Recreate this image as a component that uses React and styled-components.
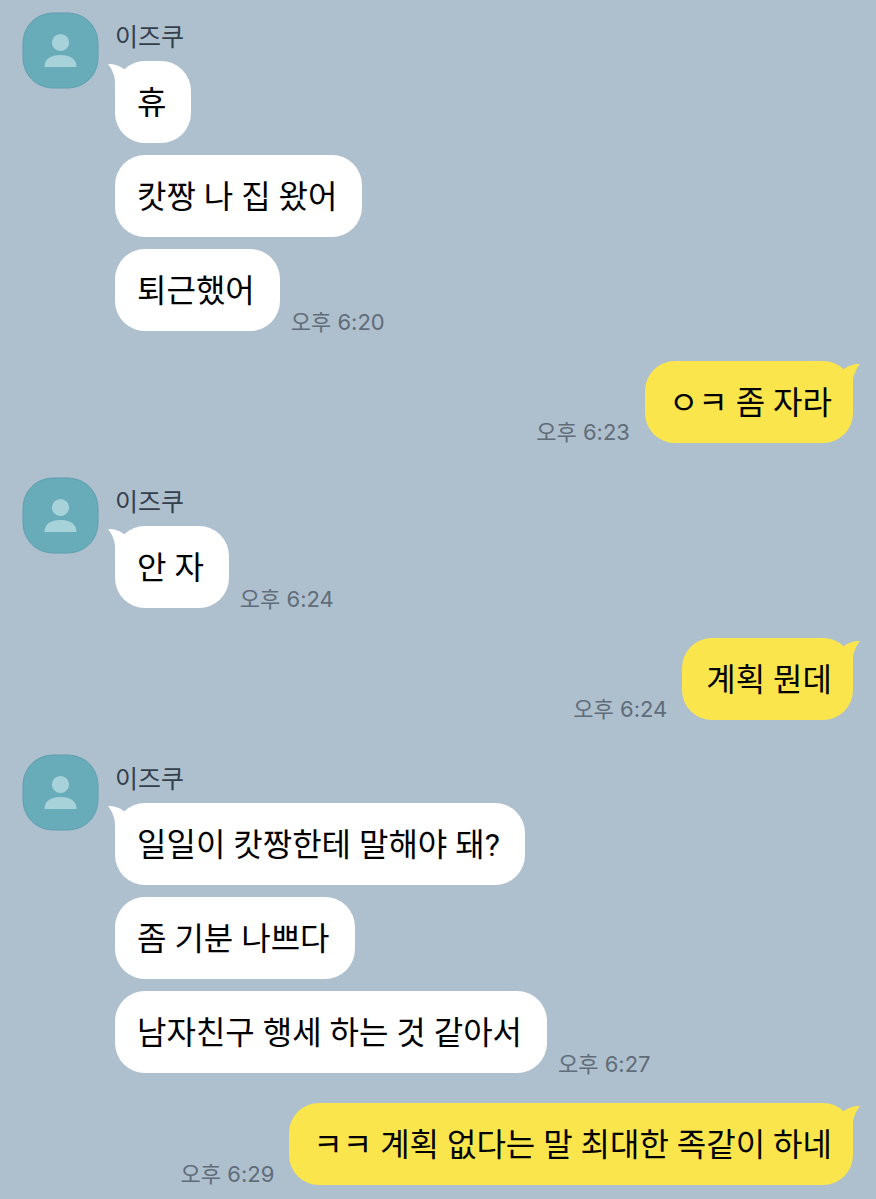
import React from 'react'
import styled, { createGlobalStyle } from 'styled-components'

const GlobalStyle = createGlobalStyle`
    * {
        box-sizing : border-box;
    }
    body {
        margin : 0;
        background-color : #aebfce;
        font-family : Inter, "Noto Sans CJK KR", sans-serif;
    }
`
const Chat = styled.main`
    display : flex;
    flex-direction : column;
    min-height : 100vh;
    padding : 12px 23px 12px 22px;
    background-color : #aebfce;
`
const ReceivedGroup = styled.section`
    display : flex;
    align-items : flex-start;
    gap : 16px;
    margin-top : 34px;
    &:first-child {
        margin-top : 0;
    }
`
const SentGroup = styled.section`
    display : flex;
    flex-direction : column;
    gap : 12px;
    margin-top : 30px;
`
const AvatarIcon = styled.svg`
    flex : none;
    width : 77px;
    height : 77px;
`
const Messages = styled.div`
    display : flex;
    flex-direction : column;
    gap : 12px;
    min-width : 0;
`
const Name = styled.h2`
    margin : 0 0 -12px;
    padding-top : 1px;
    font-size : 25px;
    font-weight : 400;
    line-height : 48px;
    color : #33404c;
`
const Row = styled.div`
    display : flex;
    align-items : flex-end;
    justify-content : ${({ $sent }) => ($sent ? 'flex-end' : 'flex-start')};
    gap : ${({ $sent }) => ($sent ? '15px' : '11px')};
`
const Bubble = styled.p`
    position : relative;
    margin : 0;
    padding : ${({ $sent }) => ($sent ? '18px 21px 16px 24px' : '18px 25px 16px 22px')};
    border-radius : 30px;
    background-color : ${({ $sent }) => ($sent ? '#fae64c' : '#ffffff')};
    font-family : Roboto, "Noto Sans CJK KR", sans-serif;
    font-size : 32px;
    line-height : 48px;
    color : #000000;
`
const TailIcon = styled.svg`
    position : absolute;
    top : 3px;
    width : 18px;
    height : 26px;
    fill : ${({ $sent }) => ($sent ? '#fae64c' : '#ffffff')};
    ${({ $sent }) => ($sent ? 'right : -7px;' : 'left : -7px; transform : scaleX(-1);')}
`
const Time = styled.time`
    flex : none;
    font-size : 22px;
    font-weight : 400;
    line-height : ${({ $sent }) => ($sent ? '22px' : '18px')};
    white-space : nowrap;
    color : #606c78;
`

const conversation = [
    { name: '이즈쿠', time: '오후 6:20', texts: ['휴', '캇짱 나 집 왔어', '퇴근했어'] },
    { sent: true, time: '오후 6:23', texts: ['ㅇㅋ 좀 자라'] },
    { name: '이즈쿠', time: '오후 6:24', texts: ['안 자'] },
    { sent: true, time: '오후 6:24', texts: ['계획 뭔데'] },
    { name: '이즈쿠', time: '오후 6:27', texts: ['일일이 캇짱한테 말해야 돼?', '좀 기분 나쁘다', '남자친구 행세 하는 것 같아서'] },
    { sent: true, time: '오후 6:29', texts: ['ㅋㅋ 계획 없다는 말 최대한 족같이 하네'] },
]

const Avatar = () => (
    <AvatarIcon viewBox="0 0 77 77" aria-hidden="true">
        <path
            d="M32 1H45C63 1 76 14 76 32V45C76 63 63 76 45 76H32C14 76 1 63 1 45V32C1 14 14 1 32 1Z"
            fill="#68abb9"
            stroke="#5d9fae"
        />
        <circle cx="38.5" cy="30.5" r="8.6" fill="#a8d2da" />
        <path d="M22.5 55C22.5 47 28.5 43 38.5 43S54.5 47 54.5 55Z" fill="#a8d2da" />
    </AvatarIcon>
)

const Tail = ({ sent }) => (
    <TailIcon $sent={sent} viewBox="0 0 18 26" aria-hidden="true">
        <path d="M18 0C11 0 6 2 2 5L1 12L11 26V18C11 12 14 5 18 0Z" />
    </TailIcon>
)

const MessageList = ({ texts, time, sent }) =>
    texts.map((text, index) => {
        const last = index === texts.length - 1
        return (
            <Row key={text} $sent={sent}>
                {sent && last && <Time $sent>{time}</Time>}
                <Bubble $sent={sent}>
                    {index === 0 && <Tail sent={sent} />}
                    {text}
                </Bubble>
                {!sent && last && <Time>{time}</Time>}
            </Row>
        )
    })

export default function App() {
    return (
        <>
            <GlobalStyle />
            <Chat>
                {conversation.map((group, index) =>
                    group.sent ? (
                        <SentGroup key={index}>
                            <MessageList {...group} />
                        </SentGroup>
                    ) : (
                        <ReceivedGroup key={index}>
                            <Avatar />
                            <Messages>
                                <Name>{group.name}</Name>
                                <MessageList {...group} />
                            </Messages>
                        </ReceivedGroup>
                    )
                )}
            </Chat>
        </>
    )
}
